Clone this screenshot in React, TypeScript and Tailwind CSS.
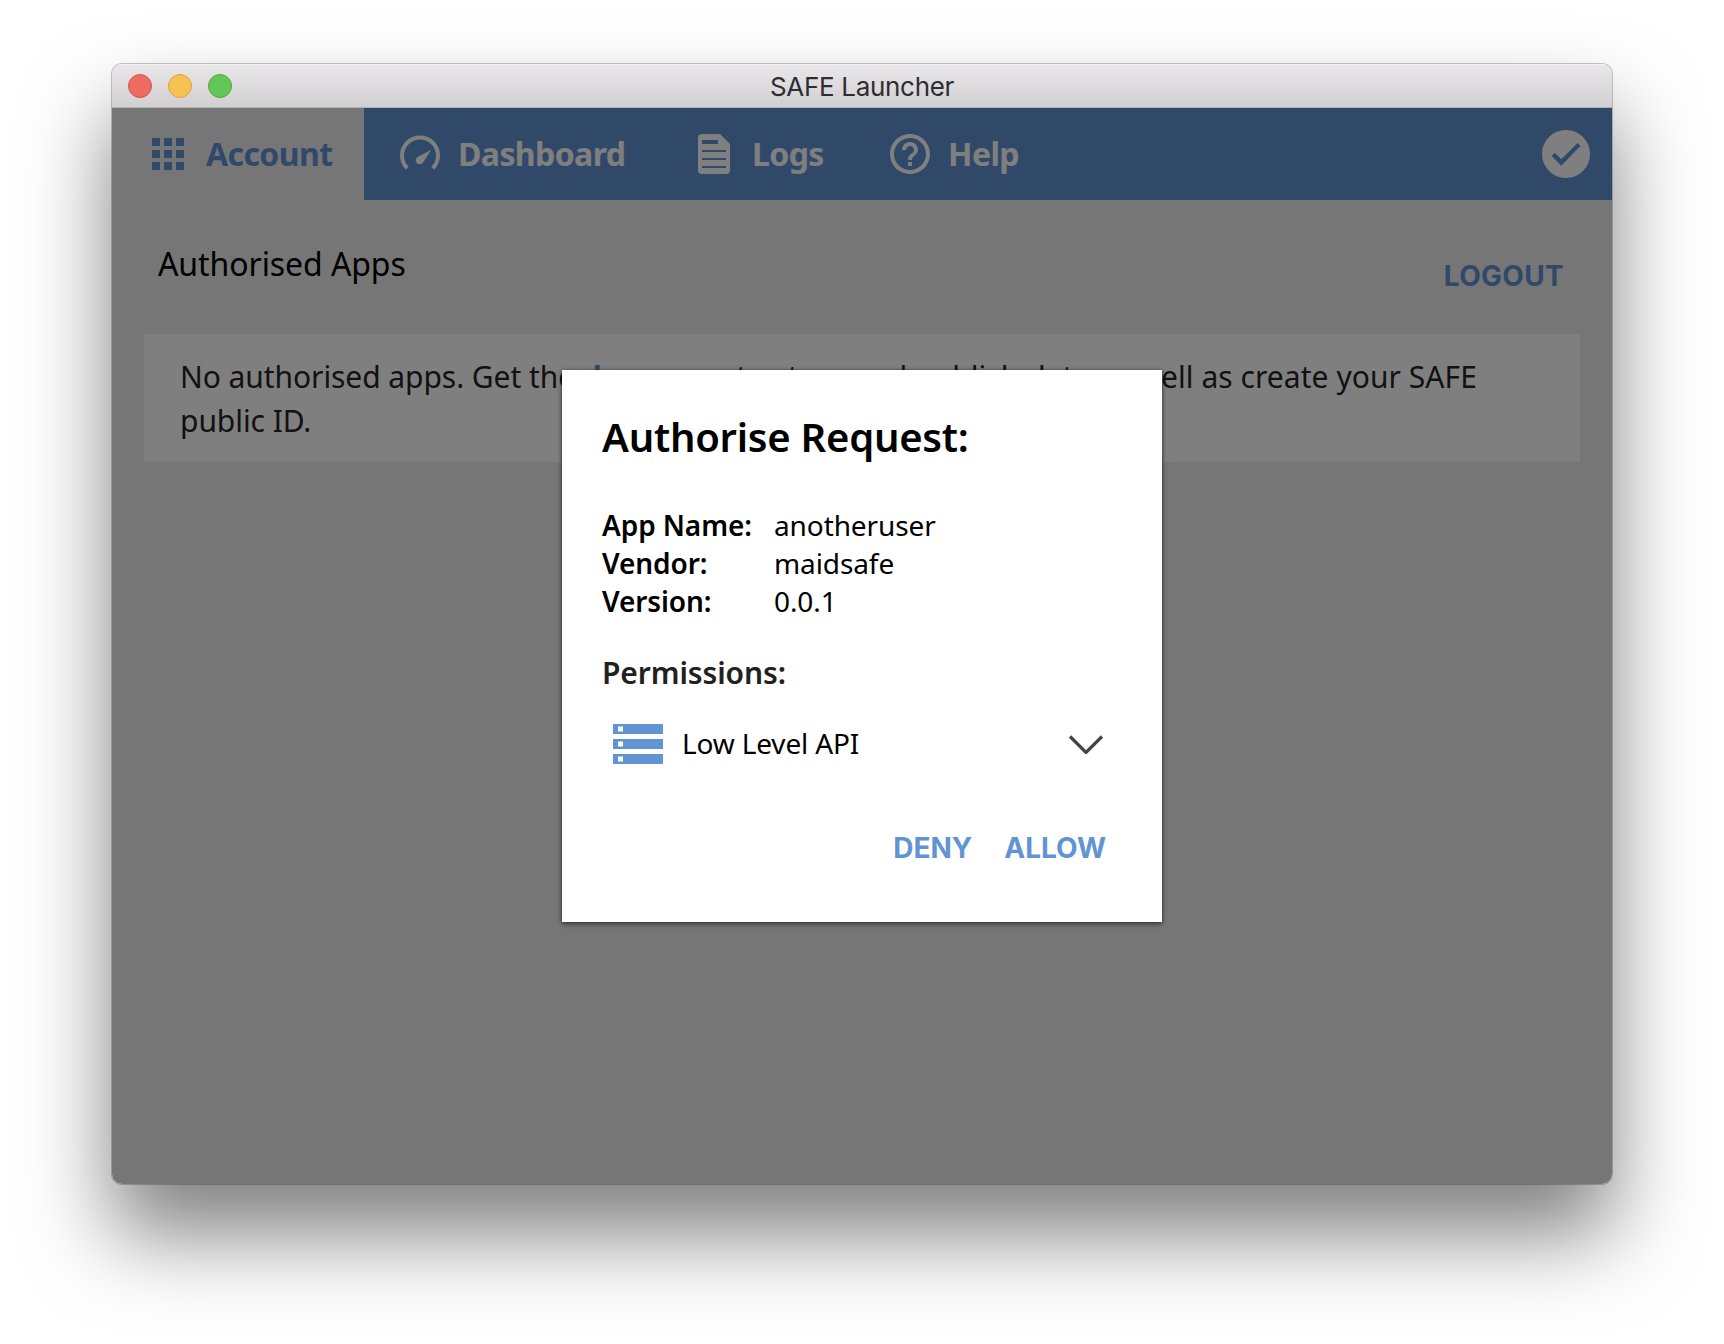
import type { ReactNode } from "react";

const GridIcon = () => (
  <svg className="size-12" viewBox="0 0 24 24" fill="currentColor">
    {[4, 10, 16].map((y) =>
      [4, 10, 16].map((x) => <rect key={`${x}-${y}`} x={x} y={y} width="4" height="4" />),
    )}
  </svg>
);

const GaugeIcon = () => (
  <svg className="size-12" viewBox="0 0 48 48" fill="none">
    <path d="M11.3 38.2 A18 18 0 1 1 36.7 38.2" stroke="currentColor" strokeWidth="4" />
    <path d="M35 20 L27.4 32 A4 4 0 1 1 22.4 26.6 Z" fill="currentColor" />
  </svg>
);

const DocumentIcon = () => (
  <svg className="size-12" viewBox="0 0 48 48" fill="currentColor" fillRule="evenodd">
    <path d="M12 4H30L40 14V40A4 4 0 0 1 36 44H12A4 4 0 0 1 8 40V8A4 4 0 0 1 12 4ZM12 10V14H28V10ZM12 20V22H36V20ZM12 28V30H36V28ZM12 36V38H36V36Z" />
  </svg>
);

const HelpIcon = () => (
  <svg className="size-12" viewBox="0 0 24 24" fill="currentColor">
    <path d="M11 18h2v-2h-2v2zm1-16C6.48 2 2 6.48 2 12s4.48 10 10 10 10-4.48 10-10S17.52 2 12 2zm0 18c-4.41 0-8-3.59-8-8s3.59-8 8-8 8 3.59 8 8-3.59 8-8 8zm0-14c-2.21 0-4 1.79-4 4h2c0-1.1.9-2 2-2s2 .9 2 2c0 2-3 1.75-3 5h2c0-2.25 3-2.5 3-5 0-2.21-1.79-4-4-4z" />
  </svg>
);

const CheckIcon = () => (
  <svg className="size-12" viewBox="0 0 48 48">
    <circle cx="24" cy="24" r="24" fill="#fff" />
    <path d="M19.3 35.7L9.7 26L12.7 22.7L19.3 29.2L35.5 13L38.4 16Z" fill="#6293d3" />
  </svg>
);

const ServerIcon = () => (
  <svg className="h-10 w-[50px]" viewBox="0 0 50 40">
    {[0, 15, 30].map((y) => (
      <g key={y}>
        <rect y={y} width="50" height="10" fill="#6293d3" />
        <rect x="5" y={y + 2.5} width="5" height="5" fill="#fff" />
      </g>
    ))}
  </svg>
);

function Tab({ icon, label, className }: { icon: ReactNode; label: string; className: string }) {
  return (
    <a className={`flex shrink-0 items-center gap-[14px] whitespace-nowrap pl-8 text-[32px] leading-none font-bold tracking-[-0.6px] ${className}`}>
      {icon}
      <span>{label}</span>
    </a>
  );
}

const details = [
  ["App Name:", "anotheruser"],
  ["Vendor:", "maidsafe"],
  ["Version:", "0.0.1"],
];

export default function App() {
  return (
    <div className="h-[1344px] w-[1724px] overflow-hidden bg-white px-28 pt-16 font-['Noto_Sans',sans-serif]">
      <div className="flex h-[1120px] w-[1500px] flex-col overflow-hidden rounded-[10px] shadow-[0_0_0_1px_rgba(0,0,0,0.22),0_50px_86px_rgba(0,0,0,0.5)]">
        <header className="grid h-11 shrink-0 grid-cols-[1fr_auto_1fr] items-center border-t border-b border-t-[#f5f4f5] border-b-[#b1afb2] bg-linear-to-b from-[#e9e7ea] to-[#d1cfd2] px-4">
          <div className="flex gap-4">
            <span className="size-6 rounded-full border border-[#d5544a] bg-[#ed6b60]" />
            <span className="size-6 rounded-full border border-[#dca23c] bg-[#f5c350]" />
            <span className="size-6 rounded-full border border-[#4fa73e] bg-[#62c756]" />
          </div>
          <h1 className="pt-0.5 font-['Inter',sans-serif] text-[26px] leading-8 tracking-[-0.3px] text-[#2f2d30]">SAFE Launcher</h1>
        </header>

        <div className="relative flex grow flex-col bg-[#ececec]">
          <nav className="flex h-[92px] shrink-0 bg-[#6293d3] text-white">
            <Tab icon={<GridIcon />} label="Account" className="w-[252px] bg-[#ececec] text-[#6293d3]" />
            <Tab icon={<GaugeIcon />} label="Dashboard" className="w-[294px]" />
            <Tab icon={<DocumentIcon />} label="Logs" className="w-[196px]" />
            <Tab icon={<HelpIcon />} label="Help" className="w-[196px]" />
            <div className="ml-auto flex items-center pr-[22px]">
              <CheckIcon />
            </div>
          </nav>

          <main className="px-8 pt-[42px]">
            <div className="flex h-[92px] items-start justify-between pr-[16px] pl-[14px]">
              <h2 className="text-[32px] leading-[44px] tracking-[-0.08px] text-black">Authorised Apps</h2>
              <button className="mt-[14px] font-['Inter',sans-serif] text-[28px] leading-10 font-bold tracking-[0.3px] text-[#6293d3]">
                LOGOUT
              </button>
            </div>
            <p className="w-[1436px] bg-white px-9 pt-[21px] pb-[19px] text-[30px] leading-[44px] tracking-[-0.07px] text-[#252525]">
              No authorised apps. Get the <span className="font-bold tracking-[-0.35px] text-[#6293d3]">demo app</span>{" "}
              <span className="tracking-[0.05px]">to store and publish data as well as create your SAFE</span> public ID.
            </p>
          </main>

          <div className="absolute inset-0 flex items-center justify-center bg-black/50">
            <section className="h-[552px] w-[600px] bg-white px-10 pt-[41px] text-black shadow-[0_2px_5px_rgba(0,0,0,0.5),0_0_3px_rgba(0,0,0,0.3)]">
              <h3 className="text-[40px] leading-[52px] font-semibold tracking-[-0.25px]">Authorise Request:</h3>
              <dl className="mt-[43px] grid grid-cols-[172px_1fr] text-[28px] leading-[38px] tracking-[-0.1px]">
                {details.map(([term, value]) => (
                  <div key={term} className="contents">
                    <dt className="font-semibold">{term}</dt>
                    <dd>{value}</dd>
                  </div>
                ))}
              </dl>
              <h4 className="mt-[33px] text-[30px] leading-10 font-semibold tracking-[-0.1px] text-[#212121]">Permissions:</h4>
              <div className="mt-[31px] flex items-center pr-[18px] pl-[11px]">
                <ServerIcon />
                <span className="ml-[19px] pb-0.5 text-[28px] leading-[38px] tracking-[-0.15px]">Low Level API</span>
                <svg className="ml-auto h-5 w-9" viewBox="0 0 36 20" fill="none">
                  <path d="M2 2.5L18 18.5L34 2.5" stroke="#444" strokeWidth="3.2" />
                </svg>
              </div>
              <div className="mt-16 flex justify-end gap-8 pr-4 font-['Inter',sans-serif] text-[28px] leading-10 font-bold text-[#6293d3]">
                <button>DENY</button>
                <button>ALLOW</button>
              </div>
            </section>
          </div>
        </div>
      </div>
    </div>
  );
}
